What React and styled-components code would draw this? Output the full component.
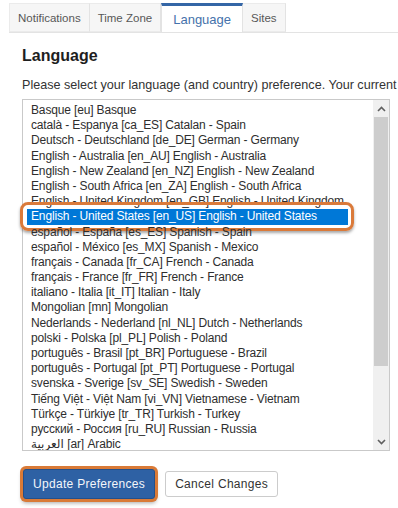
import React, { useState } from "react";
import styled, { createGlobalStyle } from "styled-components";

const GlobalStyle = createGlobalStyle`
  body {
    margin: 0;
    background: #fff;
    font-family: "Liberation Sans", Arial, "DejaVu Sans", sans-serif;
  }
`;

const languages = [
  "Basque [eu] Basque",
  "català - Espanya [ca_ES] Catalan - Spain",
  "Deutsch - Deutschland [de_DE] German - Germany",
  "English - Australia [en_AU] English - Australia",
  "English - New Zealand [en_NZ] English - New Zealand",
  "English - South Africa [en_ZA] English - South Africa",
  "English - United Kingdom [en_GB] English - United Kingdom",
  "English - United States [en_US] English - United States",
  "español - España [es_ES] Spanish - Spain",
  "español - México [es_MX] Spanish - Mexico",
  "français - Canada [fr_CA] French - Canada",
  "français - France [fr_FR] French - France",
  "italiano - Italia [it_IT] Italian - Italy",
  "Mongolian [mn] Mongolian",
  "Nederlands - Nederland [nl_NL] Dutch - Netherlands",
  "polski - Polska [pl_PL] Polish - Poland",
  "português - Brasil [pt_BR] Portuguese - Brazil",
  "português - Portugal [pt_PT] Portuguese - Portugal",
  "svenska - Sverige [sv_SE] Swedish - Sweden",
  "Tiếng Việt - Việt Nam [vi_VN] Vietnamese - Vietnam",
  "Türkçe - Türkiye [tr_TR] Turkish - Turkey",
  "русский - Россия [ru_RU] Russian - Russia",
  "العربية [ar] Arabic",
  "中文 - 中国 [zh_CN] Chinese - China",
];

const tabs = ["Notifications", "Time Zone", "Language", "Sites"];

const App = () => {
  const [active, setActive] = useState("Language");
  const [selected, setSelected] = useState("English - United States [en_US] English - United States");

  return (
    <Page>
      <GlobalStyle />
      <TabBar>
        {tabs.map((t) => (
          <Tab key={t} $active={active === t} onClick={() => setActive(t)}>
            {t}
          </Tab>
        ))}
      </TabBar>
      <Content>
        <Heading>Language</Heading>
        <Intro>
          Please select your language (and country) preference. Your current language is English - United States [en_US].
        </Intro>
        <ListBox>
          <Options>
            <OptionList>
              {languages.map((l) => (
                <Option key={l} $selected={selected === l} onClick={() => setSelected(l)}>
                  {l}
                </Option>
              ))}
            </OptionList>
          </Options>
          <ScrollBar>
            <Arrow>
              <svg width="9" height="6" viewBox="0 0 9 6">
                <path d="M1 5 L4.5 1.5 L8 5" fill="none" stroke="#606060" strokeWidth="1.6" />
              </svg>
            </Arrow>
            <Thumb />
            <Track />
            <Arrow>
              <svg width="9" height="6" viewBox="0 0 9 6">
                <path d="M1 1 L4.5 4.5 L8 1" fill="none" stroke="#606060" strokeWidth="1.6" />
              </svg>
            </Arrow>
          </ScrollBar>
        </ListBox>
        <Actions>
          <Button $primary>Update Preferences</Button>
          <Button>Cancel Changes</Button>
        </Actions>
      </Content>
    </Page>
  );
};

const Page = styled.div`
  width: 398px;
  height: 508px;
  overflow: hidden;
`;

const TabBar = styled.div`
  display: flex;
  align-items: flex-end;
  margin: 3px 0 0 9px;
  border-bottom: 1px solid #e3e3e3;
`;

const Tab = styled.div`
  box-sizing: border-box;
  height: ${(p) => (p.$active ? "30px" : "29px")};
  margin-bottom: ${(p) => (p.$active ? "-1px" : "0")};
  display: flex;
  align-items: center;
  padding: ${(p) => (p.$active ? "1px 11px 0" : "0 8px")};
  background: ${(p) => (p.$active ? "#fff" : "#f6f6f6")};
  border: 1px solid ${(p) => (p.$active ? "#e3e3e3" : "#ebebeb")};
  border-top: ${(p) => (p.$active ? "3px solid #3466a6" : "1px solid #ebebeb")};
  border-left: ${(p) => (p.$active ? "1px solid #e3e3e3" : "none")};
  border-right: 1px solid #e3e3e3;
  color: ${(p) => (p.$active ? "#4572ab" : "#585858")};
  font-size: ${(p) => (p.$active ? "13px" : "11.5px")};
  cursor: pointer;
  white-space: nowrap;
  &:first-child {
    border-left: 1px solid #ebebeb;
  }
`;

const Content = styled.div`
  padding-left: 22px;
`;

const Heading = styled.h2`
  margin: 13px 0 0;
  font-size: 16px;
  line-height: 20px;
  font-weight: bold;
  color: #1e1e1e;
`;

const Intro = styled.p`
  margin: 11px 0 0;
  font-size: 12.6px;
  line-height: 16px;
  color: #333;
  white-space: nowrap;
`;

const ListBox = styled.div`
  box-sizing: border-box;
  margin-top: 6px;
  width: 368px;
  height: 352px;
  display: flex;
  border: 1px solid #c9c9c9;
  background: #fff;
`;

const Options = styled.div`
  flex: 1;
  padding: 3px 0 0 4px;
  clip-path: inset(-12px -12px 0 -12px);
`;

const OptionList = styled.div`
  width: max-content;
`;

const Option = styled.div`
  position: relative;
  padding: 0 4px;
  font-size: 12px;
  letter-spacing: -0.15px;
  line-height: 15.18px;
  color: ${(p) => (p.$selected ? "#fff" : "#2e2e2e")};
  background: ${(p) => (p.$selected ? "#0078d7" : "transparent")};
  white-space: nowrap;
  cursor: default;
  &::after {
    content: "";
    display: ${(p) => (p.$selected ? "block" : "none")};
    position: absolute;
    inset: -7px -6px -6px -7px;
    border: 3px solid #da7a3a;
    border-radius: 8px;
    box-shadow: 0 2px 3px rgba(0, 0, 0, 0.35);
    pointer-events: none;
  }
`;

const ScrollBar = styled.div`
  width: 16px;
  display: flex;
  flex-direction: column;
  background: #f0f0f0;
`;

const Arrow = styled.div`
  height: 17px;
  display: flex;
  align-items: center;
  justify-content: center;
`;

const Thumb = styled.div`
  height: 249px;
  margin: 0 1px;
  background: #cdcdcd;
`;

const Track = styled.div`
  flex: 1;
`;

const Actions = styled.div`
  display: flex;
  align-items: center;
  gap: 10px;
  margin-top: 18px;
  padding-left: 1px;
`;

const Button = styled.button`
  box-sizing: border-box;
  height: ${(p) => (p.$primary ? "30px" : "26px")};
  padding: 0 9px;
  font-family: "Liberation Sans", Arial, sans-serif;
  font-size: 12px;
  letter-spacing: 0.3px;
  border-radius: 3px;
  border: 1px solid ${(p) => (p.$primary ? "#24508a" : "#cccccc")};
  background: ${(p) => (p.$primary ? "#2e61a4" : "#fff")};
  color: ${(p) => (p.$primary ? "#f4f6fa" : "#333")};
  box-shadow: ${(p) =>
    p.$primary ? "0 0 0 3px #d97a37, 0 3px 4px 1px rgba(0, 0, 0, 0.35)" : "none"};
  cursor: pointer;
`;

export default App;
